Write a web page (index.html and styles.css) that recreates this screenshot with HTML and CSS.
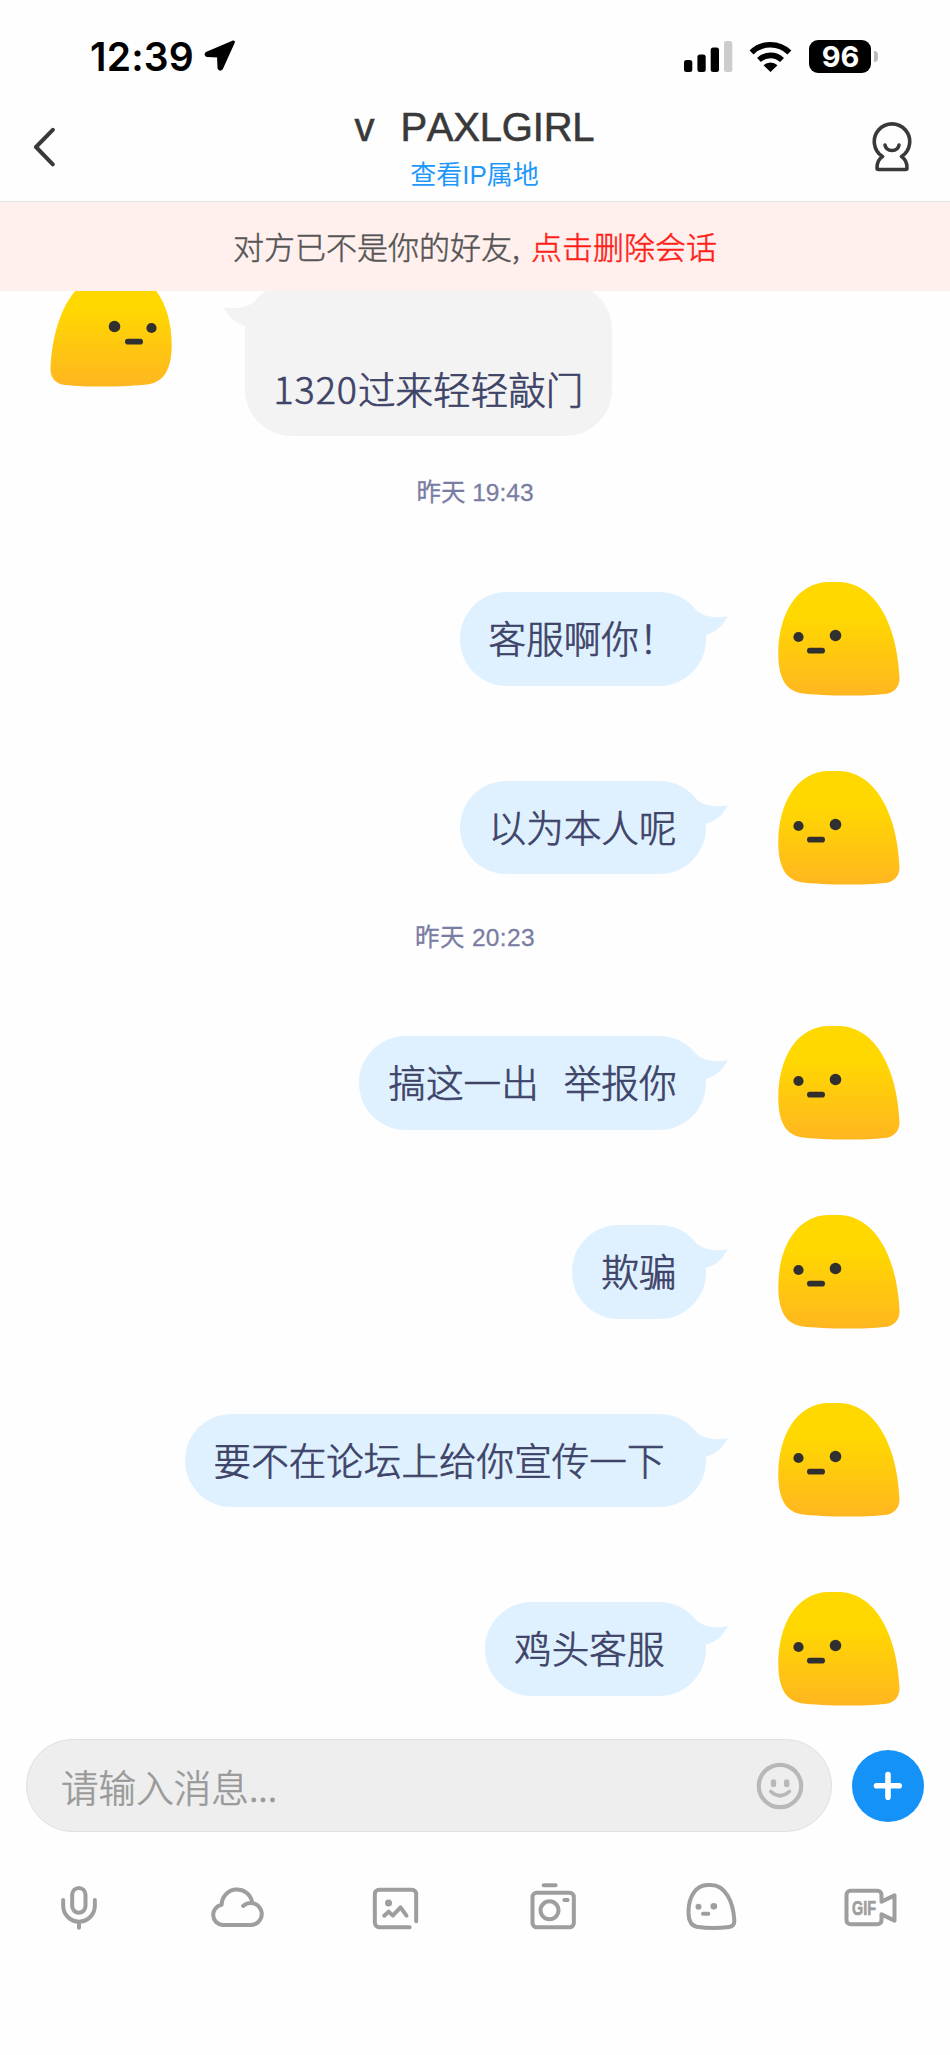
FILE: index.html
```
<!DOCTYPE html>
<html lang="zh-CN">
<head>
<meta charset="utf-8">
<title>PAXLGIRL</title>
<link rel="stylesheet" href="styles.css">
</head>
<body>
<svg class="defs" width="0" height="0" aria-hidden="true">
  <defs>
    <linearGradient id="skin" x1="0" y1="0" x2="0" y2="1">
      <stop offset="0.3" stop-color="#ffd800"/>
      <stop offset="1" stop-color="#ffb620"/>
    </linearGradient>
    <symbol id="blob" viewBox="0 0 122 114">
      <path fill="url(#skin)" d="M.3 72C.3 32 19 0 51 0H60C97 0 119 42 121.5 95C122 105 116 111 107 112C85 114.300 45 114.300 22 111C8 108 .3 96 .3 72Z"/>
      <circle cx="20.500" cy="55" r="5.100" fill="#303030"/>
      <circle cx="57.500" cy="53.500" r="5.800" fill="#303030"/>
      <rect x="29" y="65.700" width="18" height="5.800" rx="2.800" fill="#303030"/>
    </symbol>
    <symbol id="tail" viewBox="0 0 36 44">
      <path d="M0 15.500L5.500 19.300C13 25 24 26.500 36 24.200C29 36 23 40.500 13.700 42.700L0 44Z"/>
    </symbol>
  </defs>
</svg>
<div class="phone">
  <div class="status">
    <span class="clock">12:39</span>
    <svg class="location" width="32" height="32" viewBox="0 0 32 32"><path d="M29.500 2L2.500 13.500Q1.500 15 3 15.500L14.500 16L15 28Q16 30 17.500 28.500Z" stroke="#000" stroke-width="3" stroke-linejoin="round"/></svg>
    <svg class="signal" width="49" height="31" viewBox="0 0 49 31"><rect y="19" width="8.300" height="12" rx="2.500"/><rect x="13.400" y="13.500" width="8.300" height="17.500" rx="2.500"/><rect x="26.700" y="6.500" width="8.300" height="24.500" rx="2.500"/><rect x="40" y="0" width="8.300" height="31" rx="2.500" fill="#ccc"/></svg>
    <svg class="wifi" width="43" height="31" viewBox="0 0 43 31"><path d="M2.600 11.400A27 27 0 0 1 40.400 11.400M10 19A16.500 16.500 0 0 1 33 19" fill="none" stroke="#000" stroke-width="5.600"/><path d="M21.500 31L14.500 24.200A10.500 10.500 0 0 1 28.500 24.200Z"/></svg>
    <span class="battery">96</span><span class="nub"></span>
  </div>
  <header class="header">
    <svg class="back" width="24" height="40" viewBox="0 0 24 40"><path d="M20.800 2.800L4 20L20.800 37.300"/></svg>
    <div class="heading">
      <h1 class="title"><span>v</span><span>PAXLGIRL</span></h1>
      <a class="ip">查看IP属地</a>
    </div>
    <svg class="profile" width="40" height="50" viewBox="0 0 40 50"><path d="M10.500 34.500A17.700 17.700 0 1 1 29.500 34.500Q35 38 35 46Q35 47.500 33.500 47.500H6.500Q5 47.500 5 46Q5 38 10.500 34.500Z"/><path d="M13 23Q14 28.500 20 28.500T27 23"/></svg>
  </header>
  <div class="notice"><span>对方已不是你的好友, </span><a class="delete">点击删除会话</a></div>
  <main class="chat">
    <div class="row in">
      <svg class="avatar"><use href="#blob"/></svg>
      <div class="bubble"><span class="digits">1320</span>过来轻轻敲门<svg class="tail"><use href="#tail"/></svg></div>
    </div>
    <time class="date">昨天 19:43</time>
    <div class="row">
      <div class="bubble">客服啊你！<svg class="tail"><use href="#tail"/></svg></div>
      <svg class="avatar"><use href="#blob"/></svg>
    </div>
    <div class="row">
      <div class="bubble">以为本人呢<svg class="tail"><use href="#tail"/></svg></div>
      <svg class="avatar"><use href="#blob"/></svg>
    </div>
    <time class="date">昨天 20:23</time>
    <div class="row">
      <div class="bubble"><span class="gap">搞这一出</span>举报你<svg class="tail"><use href="#tail"/></svg></div>
      <svg class="avatar"><use href="#blob"/></svg>
    </div>
    <div class="row">
      <div class="bubble">欺骗<svg class="tail"><use href="#tail"/></svg></div>
      <svg class="avatar"><use href="#blob"/></svg>
    </div>
    <div class="row">
      <div class="bubble spaced">要不在论坛上给你宣传一下<svg class="tail"><use href="#tail"/></svg></div>
      <svg class="avatar"><use href="#blob"/></svg>
    </div>
    <div class="row">
      <div class="bubble spaced">鸡头客服<svg class="tail"><use href="#tail"/></svg></div>
      <svg class="avatar"><use href="#blob"/></svg>
    </div>
  </main>
  <div class="composer">
    <div class="field">
      <span>请输入消息...</span>
      <svg width="48" height="48" viewBox="0 0 48 48"><circle cx="24" cy="24" r="21.200" fill="none" stroke="#b8b8b8" stroke-width="4.200"/><rect x="14.800" y="17.300" width="5.400" height="8" rx="2.700" fill="#b8b8b8"/><rect x="28" y="17.300" width="5.400" height="8" rx="2.700" fill="#b8b8b8"/><path d="M14.800 29.500Q24 38 33.400 29.500" fill="none" stroke="#b8b8b8" stroke-width="3.600" stroke-linecap="round"/></svg>
    </div>
    <div class="add"><svg width="72" height="72" viewBox="0 0 72 72"><path d="M36 24.500V47.200M24.500 35.800H47.200" stroke="#fff" stroke-width="5.600" stroke-linecap="round"/></svg></div>
  </div>
  <nav class="tools">
    <svg viewBox="0 0 180 180"><rect x="69.500" y="30" width="40" height="74" rx="20"/><path d="M42.500 66V83.500A47.500 47.500 0 0 0 137.500 83.500V66M90 131V149"/></svg>
    <svg viewBox="0 0 180 180"><path d="M108.500 84A33 33 0 1 1 131 141H47A30.500 30.500 0 0 1 44 80.500A46 46 0 0 1 135 71"/></svg>
    <svg viewBox="0 0 180 180"><path d="M150.500 130V48a13 13 0 0 0-13-13H39.500a13 13 0 0 0-13 13V134.500a13 13 0 0 0 13 13H131M54.500 113L68 101L80.500 113L103.500 88L121.500 113"/><circle class="solid" cx="67.500" cy="75" r="10.500"/></svg>
    <svg viewBox="0 0 180 180"><rect x="25.500" y="44" width="124" height="104" rx="13"/><circle cx="76.500" cy="97" r="27"/><path d="M59 22H95M121 66H131"/></svg>
    <svg viewBox="0 0 180 180"><path d="M19.500 102C19.500 57 41 21 77 21H87C129 21 154 69 157 128C157.500 139 151 146 141 147C116 150 70 150 44 146C28 143 19.500 129 19.500 102ZM63 107H79"/><circle class="solid" cx="49.500" cy="86" r="9"/><circle class="solid" cx="95.500" cy="85" r="10"/></svg>
    <svg viewBox="0 0 180 180"><path d="M121.500 71L160.500 52V128L121.500 109V127a12 12 0 0 1-12 12H28.500a12 12 0 0 1-12-12V50a12 12 0 0 1 12-12H109.500a12 12 0 0 1 12 12Z"/><text class="gif" x="33" y="112" textLength="72" lengthAdjust="spacingAndGlyphs">GIF</text></svg>
  </nav>
</div>
</body>
</html>
```
FILE: styles.css
```
* { box-sizing: border-box; }
body {
  margin: 0;
  background: #fefefe;
  font-family: "Liberation Sans", "Noto Sans CJK SC", sans-serif;
}
svg { display: block; flex: none; }
.defs { position: absolute; }
.phone { width: 950px; height: 2055px; display: flex; flex-direction: column; overflow: hidden; }

.status { height: 112px; padding: 0 72px 0 90px; display: flex; align-items: center; flex: none; }
.clock { font: 600 39px/48px Inter, sans-serif; letter-spacing: 0.2px; width: 114px; margin-top: 2px; }
.signal { margin-left: auto; }
.wifi { margin-left: 16px; }
.battery {
  width: 62px; height: 33px; margin-left: 17px; padding-left: 1px;
  border-radius: 9px; background: #000; color: #fff;
  font: 700 29px/34px Inter, sans-serif; text-align: center;
}
.nub { width: 4px; height: 11px; margin-left: 3px; border-radius: 0 5px 5px 0; background: #bbb; }

.header {
  height: 90px; padding: 0 38px 0 32px; flex: none;
  display: grid; grid-template-columns: 40px 1fr 40px;
  border-bottom: 1px solid #e4e2e2;
}
.back, .profile { fill: none; stroke: #393939; stroke-width: 3.600; stroke-linecap: round; stroke-linejoin: round; }
.back { margin-top: 15px; stroke-width: 4; }
.profile { margin-top: 10px; }
.heading { display: flex; flex-direction: column; align-items: center; padding-right: 1px; margin-left: 6px; }
.title {
  display: flex; gap: 26px; margin: -8px 0 0; color: #393939;
  font-size: 40px; font-weight: 400; line-height: 46px; font-kerning: none;
  -webkit-text-stroke: 0.6px #393939; letter-spacing: -0.2px;
}
.ip { color: #1e98fa; font-size: 26px; line-height: 36px; margin-top: 7px; }

.notice {
  height: 89px; padding-bottom: 2px; flex: none; display: flex; justify-content: center; align-items: center;
  background: #fff0ed; color: #555; white-space: pre;
  font-family: "Noto Sans CJK SC", sans-serif; font-size: 31px; font-weight: 300; line-height: 44px;
  -webkit-text-stroke: 0.5px;
}
.delete { color: #ff1d18; margin-left: 4.500px; }

.chat { height: 1448px; flex: none; overflow: hidden; display: flex; flex-direction: column; }
.row {
  height: 113.600px; margin-bottom: 75px; padding-right: 50px; flex: none;
  display: flex; justify-content: flex-end; align-items: flex-start; gap: 72.500px;
}
.avatar { width: 122px; height: 114px; }
.bubble {
  position: relative; height: 93.500px; margin-top: 10.300px; padding: 0 29px;
  border-radius: 46.700px; background: #dff1ff; color: #3e4368;
  font-family: "Noto Sans CJK SC", sans-serif; font-size: 37.600px; font-weight: 300; line-height: 90px;
  -webkit-text-stroke: 0.7px; white-space: nowrap;
}
.spaced { padding-right: 41px; }
.gap { margin-right: 25px; }
.digits { letter-spacing: 1px; }
.tail { position: absolute; right: -22px; top: 0; width: 36px; height: 44px; fill: #dff1ff; }
.in { height: 164px; margin: -18.400px 0 0; padding: 0 0 0 50px; justify-content: flex-start; }
.in .avatar { transform: scaleX(-1); }
.in .bubble { height: 153px; padding-top: 60px; background: #f3f3f3; }
.in .tail { right: auto; left: -22px; transform: scaleX(-1); fill: #f3f3f3; }
.date {
  height: 36px; flex: none; text-align: center;
  color: #7a7da3; font-size: 24.500px; line-height: 36px; -webkit-text-stroke: 0.3px #7a7da3;
}
.row + .date { margin-top: -39.500px; margin-bottom: 70.500px; letter-spacing: 0.350px; }
.in + .date { margin-top: 38.800px; margin-bottom: 70.600px; letter-spacing: 0; }

.composer { height: 93px; padding: 0 26px; flex: none; display: flex; align-items: center; justify-content: space-between; }
.field {
  width: 806px; height: 93px; padding: 0 27px 0 34px; display: flex; align-items: center; justify-content: space-between;
  border: 1px solid #e0e0e0; border-radius: 47px; background: #eee; color: #999;
  font-family: "Noto Sans CJK SC", sans-serif; font-size: 37.600px; font-weight: 300; line-height: 56px;
  -webkit-text-stroke: 0.6px;
}
.add { width: 72px; height: 72px; border-radius: 50%; background: #1492f8; }
.tools { display: grid; grid-template-columns: repeat(6, 1fr); justify-items: center; padding-top: 46px; }
.tools svg { width: 60px; height: 60px; fill: none; stroke: #9e9e9e; stroke-width: 12px; stroke-linecap: round; stroke-linejoin: round; }
.tools .solid { fill: #9e9e9e; stroke: none; }
.tools .gif { font: bold 62px "Liberation Sans", sans-serif; fill: #9e9e9e; stroke: #9e9e9e; stroke-width: 2px; }
```
